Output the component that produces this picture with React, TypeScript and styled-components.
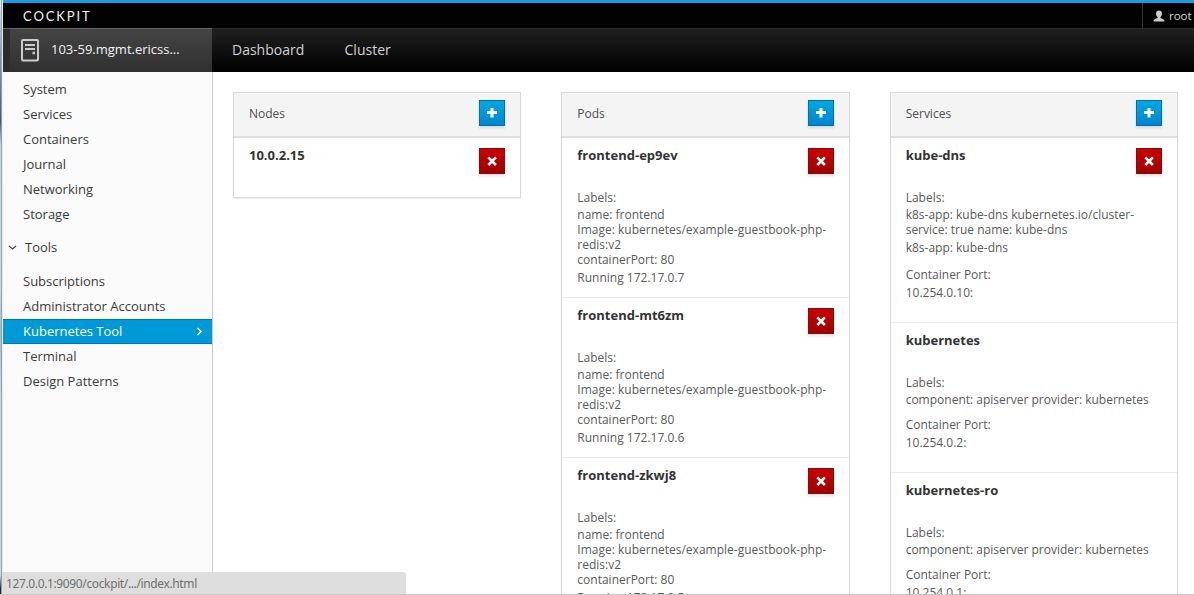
import React from "react";
import styled, { createGlobalStyle } from "styled-components";

const GlobalStyle = createGlobalStyle`
  * { box-sizing: border-box; }
  html, body { margin: 0; height: 595px; overflow: hidden; }
  body { background: #fff; font-family: "Open Sans", "Noto Sans", sans-serif; font-size: 12px; color: #5a5a5a; }
`;

const Window = styled.div`
  position: relative;
  display: flex;
  width: 1194px;
  height: 595px;
  overflow: hidden;
  border-bottom: 1px solid #c8c8c8;
`;

const WindowEdge = styled.div`
  flex: none;
  width: 3px;
  border-right: 1px solid #e8eef0;
  background: linear-gradient(90deg, transparent 1px, #8fa3ab 1px),
    linear-gradient(#dfe9f3 0, #8295b0 60px, #46566b 122px, #c5dcda 145px, #c4dfdc 290px, #a4b9d2 330px, #c8dfdc 400px, #c8dfdc 575px, #1d2b42 588px);
`;

const Page = styled.div`
  flex: 1;
  min-width: 0;
  display: flex;
  flex-direction: column;
`;

const TopBar = styled.header`
  flex: none;
  display: flex;
  justify-content: space-between;
  height: 28px;
  padding-left: 20px;
  border-top: 3px solid #1c9be0;
  background: #020202;
  color: #f2f2f2;
`;

const Brand = styled.span`
  font-family: Lato, sans-serif;
  font-size: 13px;
  line-height: 26px;
  letter-spacing: 1.9px;
`;

const UserMenu = styled.div`
  display: flex;
  align-items: center;
  gap: 4px;
  width: 52px;
  padding-left: 10px;
  border-left: 1px solid #333;
  color: #d8d8d8;
  font-size: 11.5px;
  white-space: nowrap;
  svg { flex: none; }
`;

const NavBar = styled.nav`
  flex: none;
  display: flex;
  height: 44px;
  border-top: 1px solid #2b2b2b;
  background: linear-gradient(#202020, #000);
`;

const HostTab = styled.div`
  display: flex;
  align-items: center;
  gap: 11px;
  width: 209px;
  margin-top: -1px;
  padding: 0 0 3px 18px;
  border-top: 1px solid #666;
  background: linear-gradient(90deg, #2c2c2c 7px, transparent 7px), linear-gradient(#444, #303030);
  color: #f4f4f4;
  font-size: 13px;
  font-weight: 500;
  svg { margin-top: 1px; }
`;

const NavLink = styled.a<{ $gap: number }>`
  margin-left: ${(p) => p.$gap}px;
  font-size: 14px;
  line-height: 42px;
  color: #d1d1d1;
`;

const Main = styled.div`
  flex: 1;
  min-height: 0;
  display: flex;
`;

const Sidebar = styled.aside`
  flex: none;
  width: 210px;
  padding-top: 5px;
  border-right: 1px solid #ccc;
  background: #fafafa;
  font-size: 13px;
  color: #3a3a3a;
`;

const MenuItem = styled.a<{ $active?: boolean }>`
  display: flex;
  align-items: center;
  justify-content: space-between;
  height: 25px;
  padding: 0 9px 2px 20px;
  border: solid ${(p) => (p.$active ? "#0076b7" : "transparent")};
  border-width: 1px 0;
  background: ${(p) => (p.$active ? "#0099d7" : "transparent")};
  color: ${(p) => (p.$active ? "#fff" : "inherit")};
  svg { margin-top: 2px; }
`;

const MenuGroup = styled.div`
  display: flex;
  align-items: center;
  gap: 8px;
  height: 25px;
  margin: 8px 0 9px;
  padding: 0 0 2px 5px;
  svg { margin-top: 2px; }
`;

const Columns = styled.main`
  flex: 1;
  display: flex;
  align-items: flex-start;
  gap: 40px;
  padding: 20px 16px 0 20px;
`;

const Panel = styled.section`
  flex: none;
  width: 288.33px;
  border: 1px solid #d9d9d9;
  box-shadow: 0 1px 1px rgba(0, 0, 0, 0.06);
  background: #fff;
`;

const PanelHeader = styled.div`
  display: flex;
  align-items: center;
  justify-content: space-between;
  height: 45px;
  padding: 0 15px 3px;
  border-bottom: 2px solid #dedede;
  background: #f4f4f4;
  color: #4d4d4d;
`;

const Item = styled.article<{ $height: number }>`
  height: ${(p) => p.$height}px;
  padding: 10px 15px 0;
  & + & { border-top: 1px solid #ededed; }
`;

const ItemHead = styled.div`
  display: flex;
  justify-content: space-between;
  height: 42px;
`;

const ItemTitle = styled.h2`
  margin: 0;
  font-size: 13px;
  line-height: 15px;
  font-weight: 700;
  color: #333;
`;

const Line = styled.div<{ $gap?: number }>`
  margin-top: ${(p) => p.$gap ?? 0}px;
  line-height: 15px;
  white-space: nowrap;
`;

const ActionButton = styled.button<{ $danger?: boolean }>`
  flex: none;
  display: grid;
  place-items: center;
  width: 26px;
  height: 26px;
  padding: 0;
  border: 1px solid ${(p) => (p.$danger ? "#7a1010" : "#0071a6")};
  background: ${(p) => (p.$danger ? "linear-gradient(#cc0000, #a00000)" : "linear-gradient(#00a8e1, #0085cf)")};
  box-shadow: 0 2px 3px rgba(0, 0, 0, 0.12);
`;

const StatusBubble = styled.div`
  position: absolute;
  left: 2px;
  bottom: 0;
  width: 404px;
  height: 22px;
  padding-left: 4px;
  border-radius: 0 3px 0 0;
  background: #dedede;
  color: #707070;
  font-family: "Noto Sans", sans-serif;
  font-size: 12px;
  letter-spacing: -0.37px;
  line-height: 24px;
`;

const PlusButton = () => (
  <ActionButton aria-label="Add">
    <svg width="10" height="10" viewBox="0 0 10 10">
      <path d="M3.5 0h3v3.5H10v3H6.5V10h-3V6.5H0v-3h3.5z" fill="#fff" transform="translate(0 -.5)" />
    </svg>
  </ActionButton>
);

const RemoveButton = () => (
  <ActionButton $danger aria-label="Remove">
    <svg width="10" height="10" viewBox="0 0 10 10">
      <path d="M1.300 1.400 8.900 9M8.900 1.400 1.300 9" stroke="#fff" strokeWidth="2.600" />
    </svg>
  </ActionButton>
);

type Row = [text: string, gap?: number];

const pods = [
  { name: "frontend-ep9ev", ip: "172.17.0.7" },
  { name: "frontend-mt6zm", ip: "172.17.0.6" },
  { name: "frontend-zkwj8", ip: "172.17.0.5" },
];

const services: { name: string; height: number; removable?: boolean; rows: Row[] }[] = [
  {
    name: "kube-dns",
    height: 184,
    removable: true,
    rows: [
      ["Labels:"],
      ["k8s-app: kube-dns kubernetes.io/cluster-", 2],
      ["service: true name: kube-dns"],
      ["k8s-app: kube-dns", 3],
      ["Container Port:", 12],
      ["10.254.0.10:", 3],
    ],
  },
  ...[["kubernetes", "10.254.0.2:"], ["kubernetes-ro", "10.254.0.1:"]].map(([name, ip]) => ({
    name,
    height: 150,
    rows: [
      ["Labels:"],
      ["component: apiserver provider: kubernetes", 2],
      ["Container Port:", 10],
      [ip, 3],
    ] as Row[],
  })),
];

const Rows = ({ rows }: { rows: Row[] }) => (
  <>
    {rows.map(([text, gap]) => (
      <Line key={text} $gap={gap}>{text}</Line>
    ))}
  </>
);

export default function App() {
  return (
    <Window>
      <GlobalStyle />
      <WindowEdge />
      <Page>
        <TopBar>
          <Brand>COCKPIT</Brand>
          <UserMenu>
            <svg width="12" height="12" viewBox="0 0 12 12">
              <path d="M6 .5C4.200.5 3 1.500 3 3.400c0 1.700.8 2.900 1.600 3.500v1.200C3 9 .5 9.200.5 11.500h11C11.500 9.200 9 9 7.400 8.100V6.900C8.200 6.300 9 5.100 9 3.400 9 1.500 7.800.5 6 .5z" fill="#ccc" />
            </svg>
            root
          </UserMenu>
        </TopBar>
        <NavBar>
          <HostTab>
            <svg width="19" height="24" viewBox="0 0 19 24" fill="none" stroke="#ccc">
              <rect x="1" y="2" width="16" height="20.500" rx="1" strokeWidth="2" />
              <path d="M4 7h10M4 11h10" strokeWidth="1.800" />
              <path d="M11.500 15h2.500" strokeWidth="2.500" />
            </svg>
            103-59.mgmt.ericss...
          </HostTab>
          <NavLink $gap={20}>Dashboard</NavLink>
          <NavLink $gap={40.3}>Cluster</NavLink>
        </NavBar>
        <Main>
          <Sidebar>
            {["System", "Services", "Containers", "Journal", "Networking", "Storage"].map((t) => (
              <MenuItem key={t}>{t}</MenuItem>
            ))}
            <MenuGroup>
              <svg width="9" height="7" viewBox="0 0 9 7" fill="none" stroke="#444" strokeWidth="1.200">
                <path d="m1 2 3.500 3L8 2" />
              </svg>
              Tools
            </MenuGroup>
            <MenuItem>Subscriptions</MenuItem>
            <MenuItem>Administrator Accounts</MenuItem>
            <MenuItem $active>
              Kubernetes Tool
              <svg width="7" height="9" viewBox="0 0 7 9" fill="none" stroke="#fff" strokeWidth="1.500">
                <path d="m1.500 1 3.500 3.500L1.500 8" />
              </svg>
            </MenuItem>
            <MenuItem>Terminal</MenuItem>
            <MenuItem>Design Patterns</MenuItem>
          </Sidebar>
          <Columns>
            <Panel>
              <PanelHeader>Nodes<PlusButton /></PanelHeader>
              <Item $height={59}>
                <ItemHead><ItemTitle>10.0.2.15</ItemTitle><RemoveButton /></ItemHead>
              </Item>
            </Panel>
            <Panel>
              <PanelHeader>Pods<PlusButton /></PanelHeader>
              {pods.map((pod, i) => (
                <Item key={pod.name} $height={i ? 160 : 159}>
                  <ItemHead><ItemTitle>{pod.name}</ItemTitle><RemoveButton /></ItemHead>
                  <Rows
                    rows={[
                      ["Labels:"],
                      ["name: frontend", 2],
                      ["Image: kubernetes/example-guestbook-php-"],
                      ["redis:v2"],
                      ["containerPort: 80"],
                      [`Running ${pod.ip}`, 3],
                    ]}
                  />
                </Item>
              ))}
            </Panel>
            <Panel>
              <PanelHeader>Services<PlusButton /></PanelHeader>
              {services.map((s) => (
                <Item key={s.name} $height={s.height}>
                  <ItemHead><ItemTitle>{s.name}</ItemTitle>{s.removable && <RemoveButton />}</ItemHead>
                  <Rows rows={s.rows} />
                </Item>
              ))}
            </Panel>
          </Columns>
        </Main>
      </Page>
      <StatusBubble>127.0.0.1:9090/cockpit/.../index.html</StatusBubble>
    </Window>
  );
}
